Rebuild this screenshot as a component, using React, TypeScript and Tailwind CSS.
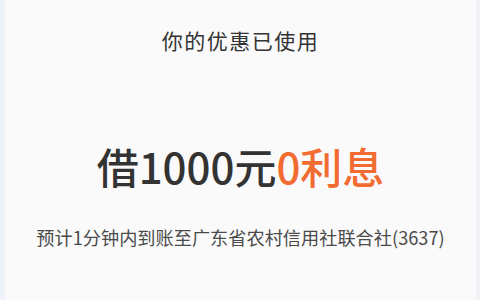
import React from "react";

export default function App() {
  return (
    <div
      className="w-[480px] h-[300px] bg-[#fafafa] flex overflow-hidden"
      style={{ fontFamily: '"Noto Sans CJK SC", "Noto Sans", sans-serif' }}
    >
      <div className="w-[5px] h-full bg-[#eef3fa]" />
      <div className="flex-1 flex flex-col items-center">
        <div className="mt-[24px] h-[32px] leading-[32px] text-[21px] text-[#333333] tracking-[1.5px]">
          你的优惠已使用
        </div>
        <div className="mt-[83px] h-[54px] leading-[54px] text-[42px] font-medium text-[#333333]">
          借1000元<span className="text-[#f26b30]">0利息</span>
        </div>
        <div className="mt-[31px] h-[26px] leading-[26px] text-[18.2px] text-[#4a4a4a]">
          预计1分钟内到账至广东省农村信用社联合社(3637)
        </div>
      </div>
      <div className="w-[4px] h-full bg-[#f1f3f7]" />
    </div>
  );
}
